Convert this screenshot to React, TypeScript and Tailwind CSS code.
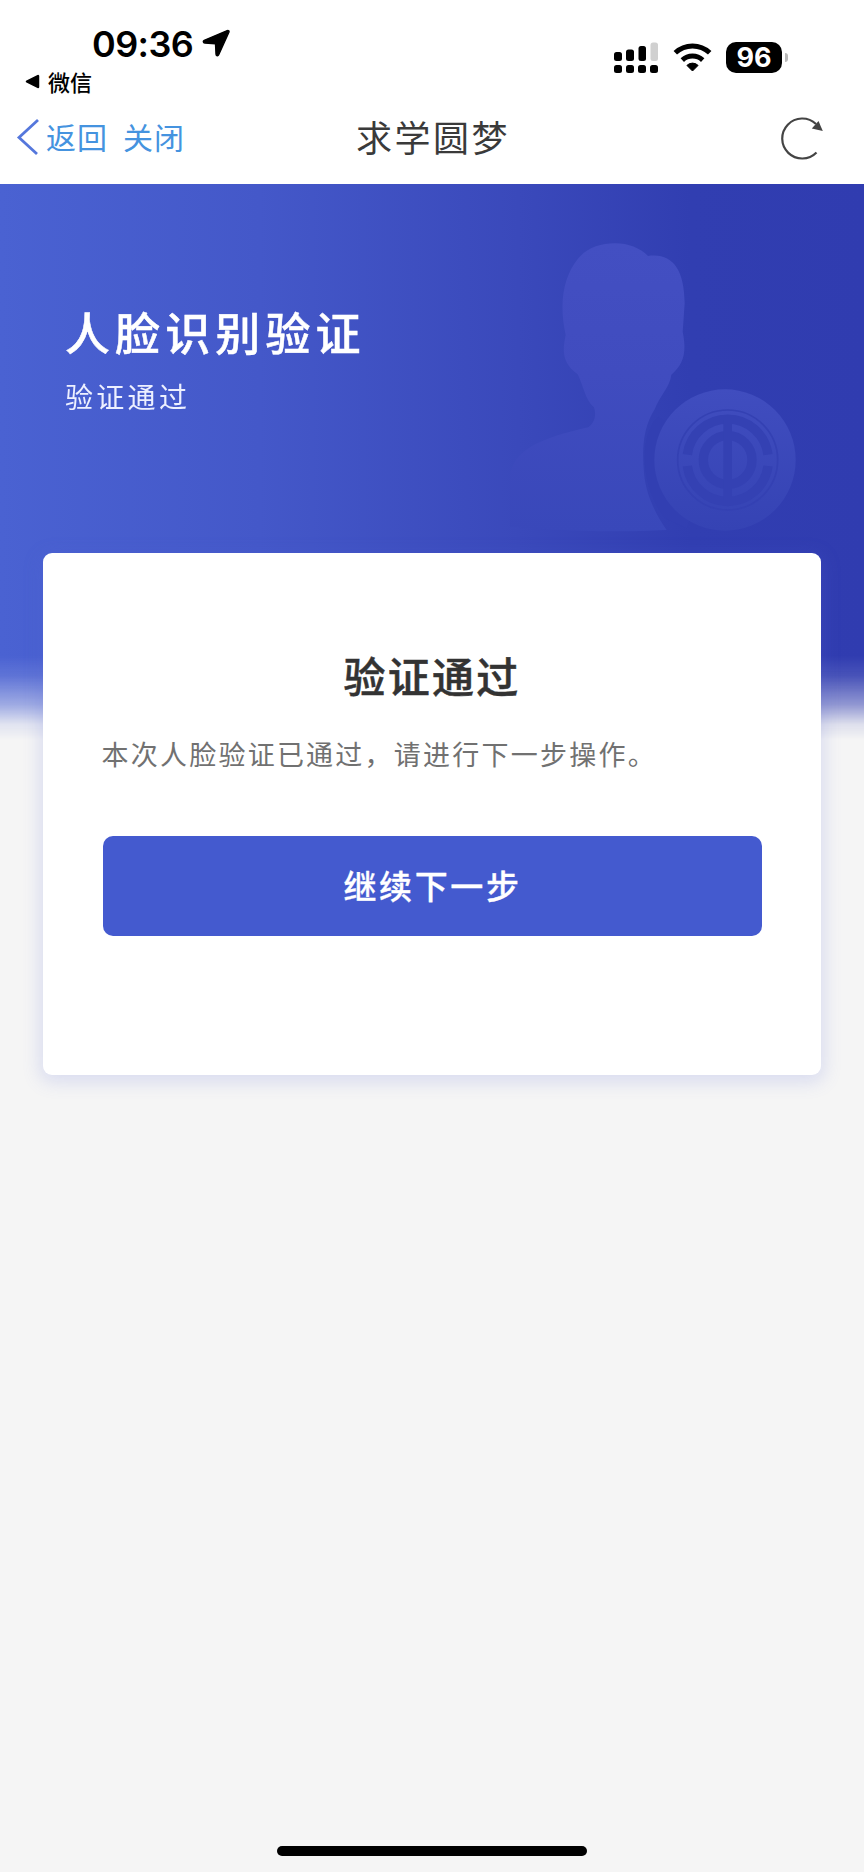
function StatusBar() {
  return (
    <div className="flex h-[96px] justify-between text-black">
      <div className="flex flex-col pl-[25px]">
        <div className="flex h-[68px] items-start pt-[22px] pl-[67px]">
          <span className="font-['Inter',sans-serif] text-[36px] leading-[44px] font-semibold tracking-[-0.600px]">09:36</span>
          <svg className="mt-[7px] ml-[9px] h-[28px] w-[28px]" viewBox="0 0 28 28">
            <path d="M25.200 1.600 2.200 11.300c-1.400.6-1 2.600.5 2.700l10.800.8.500 10.500c.1 1.600 2 2 2.700.5L26.900 3.300c.5-1.200-.5-2.200-1.700-1.700z" fill="#000" stroke="#000" strokeWidth="1.400" strokeLinejoin="round" />
          </svg>
        </div>
        <div className="flex h-[29px] items-center">
          <svg className="h-[15px] w-[15px]" viewBox="0 0 15 15">
            <path d="M2 7.500 13 2v11z" stroke="#000" strokeWidth="2.500" strokeLinejoin="round" />
          </svg>
          <span className="ml-[8px] -mt-[1px] font-['Noto_Sans_CJK_SC',sans-serif] text-[22px] leading-[27px] font-medium">微信</span>
        </div>
      </div>
      <div className="flex items-start pt-[42px] pr-[76px]">
        <svg className="h-[32px] w-[46px]" viewBox="0 0 46 32">
          <rect x="1" y="10" width="8" height="9" rx="2.500" />
          <rect x="13" y="7.500" width="8" height="11.500" rx="2.500" />
          <rect x="25.500" y="4" width="7.500" height="15" rx="2.500" />
          <rect x="37.500" y="0.500" width="7.500" height="18.500" rx="2.500" fill="#d0d0d0" />
          <rect x="1" y="23" width="8" height="8" rx="2.500" />
          <rect x="13" y="23" width="8" height="8" rx="2.500" />
          <rect x="25" y="23" width="8" height="8" rx="2.500" />
          <rect x="37" y="23" width="8" height="8" rx="2.500" />
        </svg>
        <svg className="ml-[14px] h-[30px] w-[40px]" viewBox="0 0 40 30" fill="none" stroke="#000" strokeWidth="5">
          <path d="M2.300 10.800a25 25 0 0 1 34.400 0" />
          <path d="M9.300 18.100a15 15 0 0 1 20.400 0" />
          <path d="M19.500 29l-5.600-5.600a8 8 0 0 1 11.200 0z" fill="#000" stroke="#000" strokeWidth="1" />
        </svg>
        <div className="ml-[13px] flex items-center">
          <div className="flex h-[31px] w-[56px] items-center justify-center rounded-[10px] bg-black font-['Inter',sans-serif] text-[27px] leading-[31px] font-bold text-white">96</div>
          <div className="ml-[3px] h-[9px] w-[3px] rounded-r-full bg-[#b9b9b9]" />
        </div>
      </div>
    </div>
  );
}

function NavBar() {
  return (
    <div className="grid h-[88px] grid-cols-[1fr_auto_1fr] items-center pb-[4px] font-['Noto_Sans_CJK_SC',sans-serif]">
      <div className="flex items-center pl-[16px] text-[30px] leading-[44px] font-normal tracking-[1px] text-[#4593df]">
        <svg className="-mt-[2px] h-[38px] w-[24px]" viewBox="0 0 24 38" fill="none" stroke="#5577dc" strokeWidth="2.800">
          <path d="M22 2 3 19.500 21 36" />
        </svg>
        <span className="-mt-[5px] ml-[6px]">返回</span>
        <span className="-mt-[5px] ml-[15px]">关闭</span>
      </div>
      <span className="-mt-[5px] pl-[2px] text-[36px] leading-[52px] tracking-[2.500px] text-[#3a3a3a]">求学圆梦</span>
      <div className="flex justify-end pr-[40px]">
        <svg className="h-[44px] w-[44px]" viewBox="0 0 44 44" fill="none">
          <path d="M36.500 36.500A20 20 0 1 1 36 8" stroke="#444" strokeWidth="2.200" />
          <path d="M38.500 5 42.800 15 31.800 12.500z" fill="#444" />
        </svg>
      </div>
    </div>
  );
}

function FaceEmblem() {
  return (
    <svg className="absolute top-[36px] left-[480px] h-[330px] w-[384px]" viewBox="0 0 1152 990">
      <defs>
        <linearGradient id="person" x1="0" y1="70" x2="0" y2="935" gradientUnits="userSpaceOnUse">
          <stop offset="0" stopColor="#434fc2" />
          <stop offset=".45" stopColor="#404cbf" />
          <stop offset="1" stopColor="#3948ba" />
        </linearGradient>
        <linearGradient id="badge" x1="0" y1="0" x2="0" y2="1">
          <stop offset="0" stopColor="#404dbf" />
          <stop offset="1" stopColor="#3543b4" />
        </linearGradient>
      </defs>
      <path
        d="M405 70C445 70 480 84 504 108C575 98 613 145 614 250L608 335C621 400 610 432 574 464C570 500 538 530 524 568C488 625 486 690 492 760C498 830 532 890 560 930C400 938 230 932 90 920L90 770C98 690 180 655 325 622C348 604 348 580 342 562C315 540 310 495 293 463C250 430 245 400 257 345C236 250 250 170 295 115C322 84 360 70 405 70Z"
        fill="url(#person)"
      />
      <path d="M535 590C480 640 475 790 555 895L620 925 700 720z" fill="#323fb2" />
      <circle cx="735" cy="720" r="212" fill="url(#badge)" />
      <g fill="none" stroke="#3441b3">
        <circle cx="743" cy="720" r="150" strokeWidth="5" />
        <path d="M622 704A122 122 0 0 1 864 704M622 738A122 122 0 0 0 864 738" strokeWidth="28" />
        <circle cx="743" cy="720" r="73" strokeWidth="28" />
        <path d="M743 600V840" strokeWidth="26" />
      </g>
    </svg>
  );
}

function Banner() {
  return (
    <div className="relative h-[556px] bg-[linear-gradient(90deg,#4a62d2_0%,#4458c9_30%,#3a49bb_60%,#313eb1_80%,#303cb0_100%)] [mask-image:linear-gradient(180deg,#000_0,#000_472px,rgba(0,0,0,.88)_492px,rgba(0,0,0,.5)_521px,rgba(0,0,0,.12)_540px,transparent_556px)] px-[65px] pt-[116px] font-['Noto_Sans_CJK_SC',sans-serif] text-white">
      <FaceEmblem />
      <h1 className="text-[45px] leading-[64px] font-medium tracking-[5.100px] [-webkit-text-stroke:0.500px_white]">人脸识别验证</h1>
      <p className="mt-[12px] text-[28px] leading-[40px] font-normal tracking-[3.300px] text-[#edf0ff]">验证通过</p>
    </div>
  );
}

function ResultCard() {
  return (
    <section className="relative mx-[43px] mt-[-187px] flex h-[522px] flex-col rounded-[9px] bg-white px-[59.500px] pt-[92px] font-['Noto_Sans_CJK_SC',sans-serif] shadow-[0_4px_18px_3px_rgba(90,105,215,0.18)]">
      <h2 className="text-center text-[42px] leading-[60px] font-medium tracking-[2.300px] text-[#333] [-webkit-text-stroke:0.500px_#333]">验证通过</h2>
      <p className="mt-[29px] -ml-[1px] text-[27px] leading-[40px] font-normal tracking-[2.230px] text-[#717171]">本次人脸验证已通过，请进行下一步操作。</p>
      <button className="mt-[62px] h-[100px] rounded-[10px] bg-[#445acf] pl-[1px] text-[33px] font-medium tracking-[2.600px] text-white [-webkit-text-stroke:0.300px_white]">继续下一步</button>
    </section>
  );
}

export default function App() {
  return (
    <div className="flex h-[1872px] w-[864px] flex-col overflow-hidden bg-[#f5f5f5]">
      <header className="bg-white">
        <StatusBar />
        <NavBar />
      </header>
      <Banner />
      <ResultCard />
      <div className="mx-auto mt-auto mb-[16px] h-[10px] w-[310px] rounded-full bg-black" />
    </div>
  );
}
